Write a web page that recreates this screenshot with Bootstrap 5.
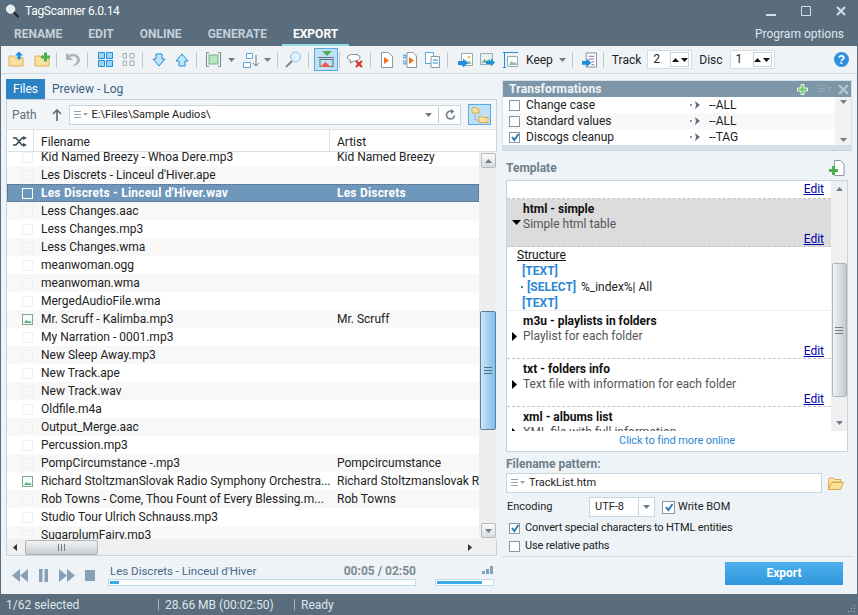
<!doctype html>
<html lang="en"><head><meta charset="utf-8"><title>TagScanner</title>
<link href="https://cdn.jsdelivr.net/npm/bootstrap@5.3.0/dist/css/bootstrap.min.css" rel="stylesheet">
<style>
html,body{height:615px;overflow:hidden;margin:0}
body{font:12px/16px Roboto,"Noto Sans",sans-serif;color:#222;background:#596d7d}
.shell{width:858px;height:615px;display:flex;flex-direction:column}
.ttl{height:25px;color:#fff;font-size:12px;padding:0 0 3px 5px;gap:5px;letter-spacing:-.3px}
.wbtn{gap:25px;padding-right:12px;margin-left:auto}
.menu{height:21px;padding-left:14px;color:#c5d0d9;font-weight:700;font-size:12px}
.menu span{margin-right:26px;line-height:19px;height:21px}
.menu .on{color:#fff;border-bottom:2px solid #8fdbe8;padding:0 11px;margin-left:-11px;margin-right:0}
.popt{font-weight:400;color:#dfe6eb;font-size:12px}
.menu .popt{margin-left:auto;margin-right:14px}
.work{flex:1;margin:0 1px;background:#eef3f7;display:flex;flex-direction:column;min-height:0}
.tbar{height:28px;padding-left:7px;border-bottom:1px solid #cfdae2;background:#eff3f6;flex:none}
.tsep{width:1px;height:16px;background:#bcc7cf;flex:none}
.g1{margin-left:1px}.g3{margin-left:3px}.g5{margin-left:5px}.g6{margin-left:6px}.g7{margin-left:7px}.g8{margin-left:8px}.g9{margin-left:9px}.g10{margin-left:10px}.g15{margin-left:15px}
.actb{width:24px;height:23px;background:#bfe1f5;border:1px solid #5aa9dc;margin-left:5px;display:flex;align-items:center;justify-content:center;flex:none}
.spin{height:19px;width:45px;background:#fff;border:1px solid #d3dde4;padding-left:5px;line-height:17px;flex:none}
.spb{width:19px;height:15px;border:1px solid #c8d2da;margin:1px 2px 0 auto;display:flex;flex:none}
.spb b{flex:1;display:flex;align-items:center;justify-content:center}
.main{flex:1;min-height:0;display:flex}
.lft{width:496px;padding:5px 0 0 5px;display:flex;flex-direction:column;flex:none}
.ftabs{height:20px;display:flex;flex:none}
.ftab{padding:0 7px;line-height:20px;color:#3f5f7e}
.ftab.on{background:#2b83c3;color:#fff}
.fbox{flex:1;min-height:0;border:1px solid #c8d4dd;background:#f2f5f8;display:flex;flex-direction:column}
.prow{height:29px;padding:0 5px;flex:none;color:#5f6f7b}
.pinp{flex:1;height:20px;margin:0 7px;background:#fff;border:1px solid #c9d5dd;color:#222;padding-left:4px;font-size:11px}
.flbtn{width:23px;height:21px;background:#bfe1f5;border:1px solid #5aa9dc;display:flex;align-items:center;justify-content:center;flex:none}
.thead{height:23px;background:#fff;border-top:1px solid #dde5ea;border-bottom:1px solid #d5dfe6;display:flex;flex:none;line-height:25px}
.c0{width:27px;flex:none;display:flex;align-items:center;justify-content:center}
.c1{width:296px;flex:none;padding-left:7px;white-space:nowrap;overflow:hidden}
.c2{flex:1;padding-left:7px;white-space:nowrap;overflow:hidden;min-width:0}
.thead .c0,.thead .c1{border-right:1px solid #dde5ea}
.thead .c0{padding-top:2px}
.fmid{flex:1;min-height:0;display:flex}
.rows{width:472px;overflow:hidden;background:#fff;flex:none}
.rows2{margin-top:-4px}
.frow{height:18px;line-height:18px;display:flex;background:#fff}
.frow.alt{background:#f8f8f8}
.frow.sel{background:#6f96bb;color:#fff;font-weight:700;letter-spacing:.2px;outline:1px dotted #50677c;outline-offset:-1px}
.frow .c0{justify-content:flex-end;padding-right:1px}
.ck0{width:11px;height:11px;border:1px solid #f0f0f0;flex:none}
.sel .ck0{border-color:#fff}
.vsb{width:18px;flex:none;background:#eeeeee;display:flex;flex-direction:column;align-items:center;padding:1px 0}
.sbtn{width:15px;height:15px;border:1px solid #b4bcc2;border-radius:2px;background:linear-gradient(#fbfbfb,#d8dcdf);display:flex;align-items:center;justify-content:center;flex:none}
.thm{width:16px;border:1px solid #5f7e99;border-radius:2px;background:linear-gradient(90deg,#cde6f8,#9bcdf0 60%,#85bfe9);display:flex;align-items:center;justify-content:center;flex:none}
.tsp1{height:143px;flex:none}.thh{height:119px}.grow{flex:1}
.hsb{height:16px;background:#f0f0f0;display:flex;align-items:center;flex:none;padding-left:6px}
.hbtn{width:73px;height:15px;margin-left:8px;border:1px solid #adb5bb;border-radius:2px;background:linear-gradient(#f2f2f2,#c9cdd0);display:flex;align-items:center;justify-content:center}
.plyr{height:38px;flex:none;padding-left:6px;padding-right:3px}
.pbar{height:7px;background:#fff;border:1px solid #c0ddef;padding:1px;display:flex}
.pbar b{background:#38abe2;display:block}
.pf1{width:9px}.pf2{width:45px}
.pttl{color:#46698a;line-height:13px;font-size:11.5px}
.ptime{color:#7d8a94;font-weight:700;font-size:12px;line-height:13px}
.pm1{width:308px;margin-left:11px}.pm2{width:59px;margin-left:19px}
.ptx{padding-left:2px;margin-bottom:1px}
.rgt{flex:1;min-width:0;padding:6px 5px 0 5px;display:flex;flex-direction:column}
.trf{background:#d6e0e7;padding:1px;padding-bottom:5px;flex:none;border-bottom:1px solid #c6d2db}
.trh{height:16px;background:#7d97a8;color:#f1f5f7;font-weight:700;padding:0 2px 0 6px;line-height:16px;letter-spacing:.2px}
.trm{display:flex;background:#fff;height:48px}
.trl{flex:1}
.trr{height:16px;line-height:16px;display:flex;align-items:center;padding-left:6px}
.trr.alt{background:#f8f8f8}
.cbx{width:11px;height:11px;border:1px solid #8a97a1;background:#fff;flex:none;display:flex;align-items:center;justify-content:center}
.cbx.big{width:13px;height:13px}
.trn{width:170px;padding-left:6px}
.trv{padding-left:8px}
.trsb{width:16px;background:#f2f2f2;display:flex;flex-direction:column;justify-content:space-between;align-items:center;padding:3px 0}
.tpl{flex:1;min-height:0;padding:0 3px 0 4px;display:flex;flex-direction:column}
.hdg{color:#6f7f8b;font-weight:700;height:29px;padding-top:9px;flex:none;padding-right:4px}
.tbx{height:272px;width:342px;border:1px solid #c8d4dd;background:#fff;display:flex;flex-direction:column;flex:none}
.tin{height:250px;display:flex;flex:none}
.tls{width:324px;overflow:hidden;flex:none}
.tit{height:48px;padding:2px 7px 2px 16px;border-bottom:1px dashed #c3c3c3;position:relative;display:flex;flex-direction:column;line-height:15px;flex:none;background:#fff}
.tit b{color:#111;line-height:16px}
.tit p{margin:0;color:#555;line-height:15px}
.tit a,.ted a{color:#00a;text-decoration:underline;align-self:flex-end;margin-top:auto;line-height:14px}
.ted{height:18px;border-bottom:1px dashed #c3c3c3;display:flex;justify-content:flex-end;padding:0 7px 2px 0;flex:none}
.tit.act{background:#dcdcdc}
.tri{position:absolute;left:5px;top:21px}
.stru{height:64px;padding:0 0 0 10px;line-height:16px;flex:none;border-bottom:1px solid #eee}
.stru u{color:#111}
.stru b{color:#2e87d6;font-weight:700;display:block;padding-left:5px}
.stru .s2{display:flex;align-items:center}
.stru .s2 b{padding-left:4px;width:54px}
.tvs{width:16px;background:#f0f0f0;display:flex;flex-direction:column;align-items:center;padding:6px 0;flex:none}
.tth{width:15px;height:134px;border:1px solid #adb5bb;border-radius:2px;background:linear-gradient(90deg,#f2f2f2,#c4c8cb);margin-top:72px;display:flex;align-items:center;justify-content:center;flex:none}
.more{height:20px;line-height:19px;text-align:center;color:#2e87d6;flex:none;font-size:11px;letter-spacing:-.1px}
.hdg2{color:#6f7f8b;font-weight:700;margin-top:5px;height:15px;line-height:15px;flex:none}
.fnp{height:20px;flex:none;margin-top:1px}
.finp{width:316px;height:20px;background:#fff;border:1px solid #c9d5dd;padding-left:4px;flex:none;font-size:11px}
.enc{height:20px;margin-top:4px;padding-left:1px;flex:none;font-size:11px}
.enl{width:82px;flex:none}
.encb{width:66px;height:20px;background:#fff;border:1px solid #c9d5dd;display:flex;line-height:18px;padding-left:5px;flex:none}
.encb i{margin-left:auto;width:16px;border-left:1px solid #c9d5dd;display:flex;align-items:center;justify-content:center}
.opt{height:18px;padding-left:3px;flex:none;gap:5px;font-size:11px;letter-spacing:-.15px}
.opt1{margin-top:2px}
.fsep{height:1px;background:#d5dee5;margin:1px -4px 0;flex:none}
.expw{padding:5px 6px 0 0;flex:none;display:flex;justify-content:flex-end}
.expb{width:118px;height:23px;border:0;border-radius:0;background:linear-gradient(#4eb1ed,#2f97dd);color:#fff;font-weight:700;font-size:12px;padding:0;line-height:23px}
.stat{height:21px;color:#dfe6eb;padding-left:6px;position:relative;flex:none}
.st1{width:152px}.st2{width:129px}
.stsep{width:1px;height:11px;background:#a9b6c0;margin-right:6px}
.grip{position:absolute;right:2px;bottom:2px}
svg{display:block;flex:none}
</style></head><body>
<svg width="0" height="0" class="position-absolute">
<defs>
<symbol id="folder" viewBox="0 0 16 16"><path d="M1 6V4.500h5l1 1.500h8v8.500H1z" fill="#fbdf9d" stroke="#d9b163"/></symbol>
<symbol id="caret" viewBox="0 0 7 4"><path d="M0 0h7L3.500 4z" fill="#6d7d89"/></symbol>
<symbol id="cup" viewBox="0 0 7 4"><path d="M0 4h7L3.500 0z" fill="#111"/></symbol>
<symbol id="cdn" viewBox="0 0 7 4"><path d="M0 0h7L3.500 4z" fill="#111"/></symbol>
<symbol id="lst" viewBox="0 0 14 8"><path d="M0 .5h7M0 3.500h7M0 6.500h7" stroke="#9aa5ad" fill="none"/><path d="M9 2h5l-2.500 3z" fill="#9aa5ad"/></symbol>
<symbol id="arr" viewBox="0 0 11 8"><path d="M0 3h2v2H0z" fill="#8b9aa6"/><path d="M5 0l5 4-5 4 1-4z" fill="#5d7181"/></symbol>
<symbol id="chk" viewBox="0 0 10 10"><path d="M2 5l2.300 3L8.500 2" fill="none" stroke="#2f7eaa" stroke-width="2"/></symbol>
<symbol id="song" viewBox="0 0 11 11"><rect x=".5" y=".5" width="10" height="10" fill="#f2fff6" stroke="#84a594"/><path d="M2 9l2.500-3 2 2 1.500-1.500L9.500 9z" fill="#5aa37c"/></symbol>
<symbol id="pic" viewBox="0 0 16 16"><path d="M3.500 1.500h11v12h-11z" fill="#fff" stroke="#9aa8b3"/><path d="M5 12l3-4 2 2 1.500-1.500 2 3.500z" fill="#8cc29a"/><circle cx="11" cy="5" r="1.300" fill="#f1b64b"/></symbol>
<symbol id="blarr" viewBox="0 0 16 16"><path d="M0 9h5V6.500L10 11l-5 4.500V13H0z" fill="#1d8fdb"/></symbol>
</defs></svg>
<div class="shell">
<div class="ttl d-flex align-items-center"><svg width="15" height="16" viewBox="0 0 16 16"><circle cx="6" cy="6" r="4.500" fill="#e7eef2" stroke="#f5f5f5"/><path d="M9.500 9.500l5 5" stroke="#2b2b2b" stroke-width="2.500"/></svg><span>TagScanner 6.0.14</span>
<div class="wbtn d-flex align-items-center"><svg width="10" height="10" viewBox="0 0 10 10"><path d="M0 8h10v2H0z" fill="#d6dee4"/></svg><svg width="10" height="10" viewBox="0 0 10 10"><path d="M.5 .5h9v9h-9z" fill="none" stroke="#d6dee4"/></svg><svg width="10" height="10" viewBox="0 0 10 10"><path d="M1 1l8 8M9 1l-8 8" stroke="#d6dee4" stroke-width="2"/></svg></div></div>
<div class="menu d-flex"><span>RENAME</span><span>EDIT</span><span>ONLINE</span><span>GENERATE</span><span class="on">EXPORT</span><span class="popt">Program options</span></div>
<div class="work">
<div class="tbar d-flex align-items-center">
<svg width="16" height="17" viewBox="0 0 16 16"><use href="#folder"/><path d="M11 0l4 4h-2.500v4h-3V4H7z" fill="#1d8fdb"/></svg>
<svg class="g10" width="16" height="17" viewBox="0 0 16 16"><use href="#folder"/><path d="M10 1h3v3h3v3h-3v3h-3V7H7V4h3z" fill="#4caf50"/></svg>
<span class="tsep g6"></span>
<svg class="g7" width="16" height="16" viewBox="0 0 16 16"><path d="M2 1v7h7L6 5c3-2 7 0 7 3 0 3-3 5-5 6 5 0 8-3 8-6 0-5-7-8-11-5L2 1z" fill="#aab6bf"/></svg>
<span class="tsep g7"></span>
<svg class="g10" width="15" height="15" viewBox="0 0 15 15"><path d="M.5.500h6v6h-6zM8.500.500h6v6h-6zM.5 8.500h6v6h-6zM8.500 8.500h6v6h-6z" fill="#9fd3f4" stroke="#1d8fdb"/></svg>
<svg class="g9" width="13" height="13" viewBox="0 0 13 13"><path d="M1 .5h3.500v4.500H1zM8 .5h4v4.500H8zM1 8h3.500v4.500H1zM8 8h4v4.500H8z" fill="none" stroke="#a5afb7"/></svg>
<span class="tsep g7"></span>
<svg class="g9" width="14" height="14" viewBox="0 0 14 14"><path d="M4 1h6v5h3l-6 7-6-7h3z" fill="#bfe3fa" stroke="#1d8fdb"/></svg>
<svg class="g9" width="14" height="14" viewBox="0 0 14 14"><path d="M4 13h6V8h3L7 1 1 8h3z" fill="#bfe3fa" stroke="#1d8fdb"/></svg>
<span class="tsep g7"></span>
<svg class="g9" width="15" height="15" viewBox="0 0 15 15"><path d="M3 .5H.5v14H3M12 .5h2.500v14H12" fill="none" stroke="#7c8a94"/><rect x="3" y="3" width="9" height="9" fill="#b7e6c4" stroke="#79b48f"/></svg>
<svg class="g7" width="7" height="4"><use href="#caret"/></svg>
<svg class="g8" width="18" height="16" viewBox="0 0 18 16"><path d="M3.500 1.500h6v5h-6zM.5 10.500h7v5h-7z" fill="#fff" stroke="#5aa9dc"/><path d="M13 3v11M10 11l3 3 3-3" fill="none" stroke="#6d7d89"/></svg>
<svg class="g3" width="7" height="4"><use href="#caret"/></svg>
<span class="tsep g6"></span>
<svg class="g7" width="17" height="17" viewBox="0 0 17 17"><circle cx="10.500" cy="6" r="5" fill="#dff1fb" stroke="#8fc4e4"/><path d="M7 10l-6 6" stroke="#7a8791" stroke-width="2"/></svg>
<span class="tsep g6"></span>
<div class="actb"><svg width="18" height="17" viewBox="0 0 18 17"><path d="M5 0h10l-5 5z" fill="#4caf50"/><path d="M1 6.500h16" stroke="#5f6f7b"/><rect x="3" y="8.500" width="13" height="7" fill="none" stroke="#5f6f7b"/><path d="M3 16L8.500 11l5.500 5z" fill="#ee5a43"/></svg></div>
<span class="tsep g1"></span>
<svg class="g7" width="17" height="16" viewBox="0 0 17 16"><path d="M.5 5C.5 1.500 13 1.500 13 5s-4 4-6 4L3 11l1-2.500C2 8 .5 7 .5 5z" fill="#fff" stroke="#7c8a94"/><path d="M9 9l6 6M15 9l-6 6" stroke="#d9342b" stroke-width="2.200"/></svg>
<span class="tsep g6"></span>
<svg class="g10" width="12" height="16" viewBox="0 0 12 16"><path d="M.5.500h7l4 4v11H.5z" fill="#fff" stroke="#8d99a3"/><path d="M3 5l5 3.500L3 12z" fill="#e9731e"/></svg>
<svg class="g10" width="14" height="16" viewBox="0 0 14 16"><path d="M4 .5h6l3.500 3.500v11.500H4z" fill="#fff" stroke="#8d99a3"/><path d="M0 3h3v3H0zM0 9h3v3H0z" fill="#bfe3fa" stroke="#1d8fdb" stroke-width=".7"/><path d="M6 5l5 3.500L6 12z" fill="#e9731e"/></svg>
<svg class="g8" width="15" height="16" viewBox="0 0 15 16"><path d="M.5.500h8v11h-8z" fill="#fff" stroke="#5aa9dc"/><path d="M6 4.500h8.500v11H6z" fill="#fff" stroke="#8d99a3"/><path d="M8 8h5M8 11h5" stroke="#1d8fdb"/></svg>
<span class="tsep g7"></span>
<svg class="g10" width="16" height="16" viewBox="0 0 16 16"><use href="#pic"/><use href="#blarr"/></svg>
<svg class="g5" width="16" height="16" viewBox="0 0 16 16"><path d="M1.500 1.500h12v11h-12z" fill="#e7f0f5" stroke="#9aa8b3"/><path d="M2.500 11l3-4 2 2 3-2 2 3z" fill="#6eb388"/><path d="M7 9h5V6.500l4 4-4 4V12H7z" fill="#1d8fdb"/></svg>
<svg class="g8" width="15" height="16" viewBox="0 0 15 16"><path d="M0 .5h15M0 15.500h3M1.500 1v14" stroke="#1d8fdb"/><path d="M4.500 4.500h10v10h-10z" fill="#fff" stroke="#9aa8b3"/><path d="M5.500 13l3-4 2 2 1.500-1 2 3z" fill="#8cc29a"/></svg>
<span class="g8">Keep</span><svg class="g6" width="7" height="4"><use href="#caret"/></svg>
<span class="tsep g6"></span>
<svg class="g9" width="15" height="16" viewBox="0 0 16 16"><path d="M4.500.5h11v15h-11z" fill="#fff" stroke="#7c8a94"/><path d="M7 4h6M7 7h6M10 10h3M10 13h3" stroke="#8a5fb0"/><use href="#blarr"/></svg>
<span class="tsep g6"></span>
<span class="g8">Track</span>
<div class="spin d-flex g6"><span>2</span><div class="spb"><b><svg width="7" height="4"><use href="#cup"/></svg></b><b><svg width="7" height="4"><use href="#cdn"/></svg></b></div></div>
<span class="g7">Disc</span>
<div class="spin d-flex g7"><span>1</span><div class="spb"><b><svg width="7" height="4"><use href="#cup"/></svg></b><b><svg width="7" height="4"><use href="#cdn"/></svg></b></div></div>
<svg class="ms-auto me-2" width="15" height="15" viewBox="0 0 15 15"><circle cx="7.500" cy="7.500" r="7.500" fill="#2f8fe0"/><text x="7.500" y="12" font-size="12" font-weight="700" text-anchor="middle" fill="#fff" font-family="Liberation Sans">?</text></svg>
</div>
<div class="main">
<div class="lft">
<div class="ftabs"><div class="ftab on">Files</div><div class="ftab">Preview - Log</div></div>
<div class="fbox">
<div class="prow d-flex align-items-center"><span>Path</span>
<svg class="g15" width="10" height="12" viewBox="0 0 10 12"><path d="M5 12V2M1 5l4-4 4 4" fill="none" stroke="#5f6f7b" stroke-width="1.700"/></svg>
<div class="pinp d-flex align-items-center"><svg width="14" height="8"><use href="#lst"/></svg><span class="ms-1">E:\Files\Sample Audios\</span>
<svg class="ms-auto" width="7" height="4"><use href="#caret"/></svg><span class="tsep g6"></span>
<svg class="g6 me-1" width="11" height="12" viewBox="0 0 11 12"><path d="M9.500 6.500a4 4 0 1 1-2-4" fill="none" stroke="#6d7d89" stroke-width="1.600"/><path d="M6 0l3.500 2.500L6 5z" fill="#6d7d89"/></svg></div>
<div class="flbtn"><svg width="18" height="18" viewBox="0 0 18 18"><path d="M1 1.500h4l1 1.500h2v4H1zM8 10.500h3l1 1h5v5H8z" fill="#fbdf9d" stroke="#d9a94f"/><path d="M4 9v5h3" fill="none" stroke="#7c8a94" stroke-dasharray="1 1"/></svg></div>
</div>
<div class="thead"><div class="c0"><svg width="14" height="11" viewBox="0 0 14 11"><path d="M0 2h3l6 7h2M0 9h3l6-7h2" fill="none" stroke="#3d4a54" stroke-width="1.600"/><path d="M10 0l4 2-4 2zM10 7l4 2-4 2z" fill="#3d4a54"/></svg></div><div class="c1">Filename</div><div class="c2">Artist</div></div>
<div class="fmid">
<div class="rows"><div class="rows2">
<div class="frow"><div class="c0"><span class="ck0"></span></div><div class="c1">Kid Named Breezy - Whoa Dere.mp3</div><div class="c2">Kid Named Breezy</div></div>
<div class="frow alt"><div class="c0"><span class="ck0"></span></div><div class="c1">Les Discrets - Linceul d'Hiver.ape</div><div class="c2"></div></div>
<div class="frow sel"><div class="c0"><span class="ck0"></span></div><div class="c1">Les Discrets - Linceul d'Hiver.wav</div><div class="c2">Les Discrets</div></div>
<div class="frow alt"><div class="c0"><span class="ck0"></span></div><div class="c1">Less Changes.aac</div><div class="c2"></div></div>
<div class="frow"><div class="c0"><span class="ck0"></span></div><div class="c1">Less Changes.mp3</div><div class="c2"></div></div>
<div class="frow alt"><div class="c0"><span class="ck0"></span></div><div class="c1">Less Changes.wma</div><div class="c2"></div></div>
<div class="frow"><div class="c0"><span class="ck0"></span></div><div class="c1">meanwoman.ogg</div><div class="c2"></div></div>
<div class="frow alt"><div class="c0"><span class="ck0"></span></div><div class="c1">meanwoman.wma</div><div class="c2"></div></div>
<div class="frow"><div class="c0"><span class="ck0"></span></div><div class="c1">MergedAudioFile.wma</div><div class="c2"></div></div>
<div class="frow alt"><div class="c0"><svg width="11" height="11"><use href="#song"/></svg></div><div class="c1">Mr. Scruff - Kalimba.mp3</div><div class="c2">Mr. Scruff</div></div>
<div class="frow"><div class="c0"><span class="ck0"></span></div><div class="c1">My Narration - 0001.mp3</div><div class="c2"></div></div>
<div class="frow alt"><div class="c0"><span class="ck0"></span></div><div class="c1">New Sleep Away.mp3</div><div class="c2"></div></div>
<div class="frow"><div class="c0"><span class="ck0"></span></div><div class="c1">New Track.ape</div><div class="c2"></div></div>
<div class="frow alt"><div class="c0"><span class="ck0"></span></div><div class="c1">New Track.wav</div><div class="c2"></div></div>
<div class="frow"><div class="c0"><span class="ck0"></span></div><div class="c1">Oldfile.m4a</div><div class="c2"></div></div>
<div class="frow alt"><div class="c0"><span class="ck0"></span></div><div class="c1">Output_Merge.aac</div><div class="c2"></div></div>
<div class="frow"><div class="c0"><span class="ck0"></span></div><div class="c1">Percussion.mp3</div><div class="c2"></div></div>
<div class="frow alt"><div class="c0"><span class="ck0"></span></div><div class="c1">PompCircumstance -.mp3</div><div class="c2">Pompcircumstance</div></div>
<div class="frow"><div class="c0"><svg width="11" height="11"><use href="#song"/></svg></div><div class="c1">Richard StoltzmanSlovak Radio Symphony Orchestra...</div><div class="c2">Richard Stoltzmanslovak Radio</div></div>
<div class="frow alt"><div class="c0"><span class="ck0"></span></div><div class="c1">Rob Towns - Come, Thou Fount of Every Blessing.m...</div><div class="c2">Rob Towns</div></div>
<div class="frow"><div class="c0"><span class="ck0"></span></div><div class="c1">Studio Tour Ulrich Schnauss.mp3</div><div class="c2"></div></div>
<div class="frow alt"><div class="c0"><span class="ck0"></span></div><div class="c1">SugarplumFairy.mp3</div><div class="c2"></div></div>
</div></div>
<div class="vsb"><div class="sbtn"><svg width="7" height="4" viewBox="0 0 7 4"><path d="M0 4h7L3.500 0z" fill="#6d7d89"/></svg></div><div class="tsp1"></div><div class="thm thh"><svg width="8" height="7" viewBox="0 0 8 7"><path d="M0 .5h8M0 3.500h8M0 6.500h8" stroke="#4e6a80"/></svg></div><div class="grow"></div><div class="sbtn"><svg width="7" height="4"><use href="#caret"/></svg></div></div>
</div>
<div class="hsb"><svg width="4" height="7" viewBox="0 0 4 7"><path d="M4 0L0 3.500 4 7z" fill="#333"/></svg><div class="hbtn"><svg width="8" height="7" viewBox="0 0 8 7"><path d="M.5 0v7M3.500 0v7M6.500 0v7" stroke="#6d7d89"/></svg></div>
<svg class="ms-auto me-4" width="4" height="7" viewBox="0 0 4 7"><path d="M0 0l4 3.500L0 7z" fill="#333"/></svg></div>
</div>
<div class="plyr d-flex align-items-center"><svg width="85" height="13" viewBox="0 0 85 13"><path d="M8 0v13L0 6.500zM16 0v13L8 6.500zM27 0h3.500v13H27zM32.500 0H36v13h-3.500zM47 0l8 6.500L47 13zM55 0l8 6.500L55 13zM73 1h10v11H73z" fill="#87a0b5"/></svg>
<div class="pm1"><div class="ptx d-flex justify-content-between"><span class="pttl">Les Discrets - Linceul d'Hiver</span><span class="ptime">00:05 / 02:50</span></div><div class="pbar"><b class="pf1"></b></div></div>
<div class="pm2"><div class="ptx d-flex justify-content-end"><svg width="12" height="13" viewBox="0 0 12 13"><path d="M0 6h3v3H0zM4 4h3v5H4zM8 1h3v8H8z" fill="#87a0b5"/></svg></div><div class="pbar"><b class="pf2"></b></div></div>
</div>
</div>
<div class="rgt">
<div class="trf"><div class="trh d-flex align-items-center"><span>Transformations</span>
<svg class="ms-auto" width="11" height="11" viewBox="0 0 11 11"><path d="M4 .5h3v3.500h3.500v3H7v3.500H4V7H.5V4H4z" fill="#6fcf6f" stroke="#e9f5e9"/></svg>
<svg class="g10" width="14" height="8"><use href="#lst"/></svg>
<svg class="g6" width="11" height="11" viewBox="0 0 11 11"><path d="M1 1l9 9M10 1l-9 9" stroke="#b9c9d4" stroke-width="2.200"/></svg></div>
<div class="trm"><div class="trl">
<div class="trr"><span class="cbx"></span><span class="trn">Change case</span><svg width="11" height="8"><use href="#arr"/></svg><span class="trv">--ALL</span></div>
<div class="trr alt"><span class="cbx"></span><span class="trn">Standard values</span><svg width="11" height="8"><use href="#arr"/></svg><span class="trv">--ALL</span></div>
<div class="trr"><span class="cbx"><svg width="10" height="10"><use href="#chk"/></svg></span><span class="trn">Discogs cleanup</span><svg width="11" height="8"><use href="#arr"/></svg><span class="trv">--TAG</span></div>
</div><div class="trsb"><svg width="7" height="4"><use href="#caret"/></svg><svg width="7" height="4"><use href="#caret"/></svg></div></div></div>
<div class="tpl">
<div class="hdg d-flex justify-content-between align-items-start"><span>Template</span><svg width="16" height="16" viewBox="0 0 16 16"><path d="M5.500.5h6l3.500 3.500v11.500H5.500z" fill="#fff" stroke="#8d99a3"/><path d="M3 6h3v3h3v3H6v3H3v-3H0V9h3z" fill="#4caf50"/></svg></div>
<div class="tbx"><div class="tin"><div class="tls">
<div class="ted"><a href="#">Edit</a></div>
<div class="tit act"><b>html - simple</b><p>Simple html table</p><a href="#">Edit</a><svg class="tri" width="9" height="5" viewBox="0 0 9 5"><path d="M0 0h9L4.500 5z" fill="#000"/></svg></div>
<div class="stru"><u>Structure</u><b>[TEXT]</b><div class="s2"><svg class="ms-1" width="2" height="2"><rect width="2" height="2" fill="#3c9a3c"/></svg><b>[SELECT]</b><span class="ms-1">%_index%| All</span></div><b>[TEXT]</b></div>
<div class="tit"><b>m3u - playlists in folders</b><p>Playlist for each folder</p><a href="#">Edit</a><svg class="tri" width="5" height="9" viewBox="0 0 5 9"><path d="M0 0l5 4.500L0 9z" fill="#000"/></svg></div>
<div class="tit"><b>txt - folders info</b><p>Text file with information for each folder</p><a href="#">Edit</a><svg class="tri" width="5" height="9" viewBox="0 0 5 9"><path d="M0 0l5 4.500L0 9z" fill="#000"/></svg></div>
<div class="tit"><b>xml - albums list</b><p>XML file with full information</p><a href="#">Edit</a><svg class="tri" width="5" height="9" viewBox="0 0 5 9"><path d="M0 0l5 4.500L0 9z" fill="#000"/></svg></div>
</div>
<div class="tvs"><svg width="7" height="4" viewBox="0 0 7 4"><path d="M0 4h7L3.500 0z" fill="#6d7d89"/></svg><div class="tth"><svg width="8" height="7" viewBox="0 0 8 7"><path d="M0 .5h8M0 3.500h8M0 6.500h8" stroke="#6d7d89"/></svg></div><svg class="mt-auto" width="7" height="4"><use href="#caret"/></svg></div>
</div><div class="more">Click to find more online</div></div>
<div class="hdg2">Filename pattern:</div>
<div class="fnp d-flex align-items-center"><div class="finp d-flex align-items-center"><svg width="14" height="8"><use href="#lst"/></svg><span class="ms-1">TrackList.htm</span></div>
<svg class="g6" width="16" height="13" viewBox="0 0 16 13"><path d="M.5 11V2l1-1h4l1 1.500H13v2.500H4L.5 12.500z" fill="#fbe6b0" stroke="#d9a94f"/><path d="M.5 12.500L3.500 5.500h12l-3 7z" fill="#fddf93" stroke="#d9a94f"/></svg></div>
<div class="enc d-flex align-items-center"><span class="enl">Encoding</span><div class="encb"><span>UTF-8</span><i><svg width="7" height="4"><use href="#caret"/></svg></i></div><span class="cbx big g7"><svg width="10" height="10"><use href="#chk"/></svg></span><span class="g3">Write BOM</span></div>
<div class="opt opt1 d-flex align-items-center"><span class="cbx"><svg width="10" height="10"><use href="#chk"/></svg></span><span>Convert special characters to HTML entities</span></div>
<div class="opt d-flex align-items-center"><span class="cbx"></span><span>Use relative paths</span></div>
<div class="fsep"></div>
<div class="expw"><button class="btn expb">Export</button></div>
</div>
</div>
</div>
</div>
<div class="stat d-flex align-items-center"><span class="st1">1/62 selected</span><span class="stsep"></span><span class="st2">28.66 MB (00:02:50)</span><span class="stsep"></span><span>Ready</span>
<svg class="grip" width="8" height="8" viewBox="0 0 8 8"><path d="M6 0h1v1H6zM3 3h1v1H3zM6 3h1v1H6zM0 6h1v1H0zM3 6h1v1H3zM6 6h1v1H6z" fill="#aebac3"/></svg></div>
</div>
</body></html>
